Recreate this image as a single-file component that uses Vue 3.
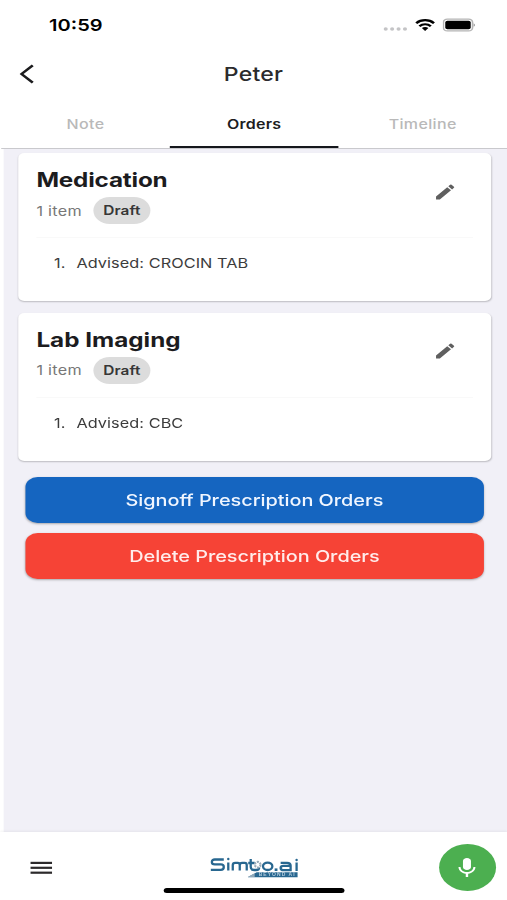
<script setup>
const tabs = [
  { label: 'Note', active: false },
  { label: 'Orders', active: true },
  { label: 'Timeline', active: false },
]
const cards = [
  { title: 'Medication', cls: 'medication', count: '1 item', status: 'Draft', items: ['Advised: CROCIN TAB'] },
  { title: 'Lab Imaging', cls: 'imaging', count: '1 item', status: 'Draft', items: ['Advised: CBC'] },
]
</script>

<template>
  <div class="screen">
    <div class="status">
      <span class="clock">10:59</span>
      <div class="indicators">
        <svg class="dots" width="20" height="14" viewBox="0 0 20 14" fill="#c4c4c6">
          <circle cx="2" cy="11" r="1.7" /><circle cx="7.3" cy="11" r="1.7" />
          <circle cx="12.6" cy="11" r="1.7" /><circle cx="17.9" cy="11" r="1.7" />
        </svg>
        <svg class="wifi" width="17" height="14" viewBox="0 0 17 14" fill="none" stroke="#000" stroke-width="2.2">
          <path d="M1.200 5.2C5.1 1.200 11.9 1.200 15.800 5.2" />
          <path d="M3.8 8.2C6.4 5.6 10.6 5.6 13.2 8.2" />
          <path d="M8.5 12.9L5.8 10.1C7.3 8.7 9.7 8.7 11.2 10.1Z" fill="#000" stroke="none" />
        </svg>
        <svg class="battery" width="27" height="14" viewBox="0 0 27 14">
          <rect x="0.6" y="1.1" width="24" height="11.8" rx="3.2" fill="#fff" stroke="#b4b4b4" stroke-width="1.3" />
          <rect x="2.1" y="2.7" width="21" height="8.6" rx="1.8" fill="#000" />
          <path d="M25.6 5.2Q27.2 7 25.6 8.8Z" fill="#777" />
        </svg>
      </div>
    </div>

    <header class="appbar">
      <svg class="back" width="12" height="20" viewBox="0 0 12 20" fill="none" stroke="#1c1c1e" stroke-width="2.3">
        <path d="M11 1.4L1.8 10L11 18.6" />
      </svg>
      <h1>Peter</h1>
    </header>

    <nav class="tabs">
      <div v-for="tab in tabs" :key="tab.label" class="tab" :class="{ active: tab.active }">{{ tab.label }}</div>
    </nav>

    <main class="body">
      <section v-for="card in cards" :key="card.title" class="card">
        <div class="card-head">
          <div>
            <h2 :class="card.cls">{{ card.title }}</h2>
            <div class="meta">
              <span class="count">{{ card.count }}</span>
              <span class="chip">{{ card.status }}</span>
            </div>
          </div>
          <svg class="edit" width="20" height="20" viewBox="0 0 24 24" fill="#5f5f5f">
            <path d="M3 17.25V21h3.75L17.81 9.94l-3.75-3.75L3 17.25zM20.71 7.04a1 1 0 0 0 0-1.41l-2.34-2.34a1 1 0 0 0-1.41 0l-1.83 1.83 3.75 3.75 1.83-1.83z" />
          </svg>
        </div>
        <div v-for="(item, i) in card.items" :key="item" class="item">
          <span class="num">{{ i + 1 }}.</span><span>{{ item }}</span>
        </div>
      </section>
      <div class="actions">
        <button class="btn sign">Signoff Prescription Orders</button>
        <button class="btn delete">Delete Prescription Orders</button>
      </div>
    </main>

    <footer class="bottom">
      <svg class="menu" width="18" height="14" viewBox="0 0 18 14" fill="#2c2a2b">
        <rect y="0.8" width="18" height="2.2" /><rect y="5.7" width="18" height="2.2" /><rect y="10.6" width="18" height="2.2" />
      </svg>
      <div class="center">
        <svg class="logo" width="74" height="24" viewBox="0 0 90 24" preserveAspectRatio="none" fill="none" stroke="#286790" stroke-width="2.3">
          <path d="M14 3.5H5Q2 3.5 2 6Q2 8.4 5 8.4H11Q14 8.4 14 11Q14 13.8 11 13.8H1" />
          <path d="M18.5 6.5V14.5M23 14.5V9Q23 6.8 25.5 6.8H28Q30 6.8 30 9V14.5M30 9Q30 6.8 32.5 6.8H35Q37 6.8 37 9V14.5" />
          <path d="M41 3V11Q41 14 44.500 14H46.500Q49.500 14 49.500 11.500M38.5 7H45" />
          <circle cx="18.5" cy="3" r="1.2" fill="#286790" stroke="none" />
          <circle cx="48" cy="8.700" r="2.800" stroke="#9aabb8" stroke-width="2.2" stroke-dasharray="2 1" />
          <ellipse cx="58" cy="10.3" rx="4.7" ry="3.7" />
          <rect x="65" y="12.4" width="2.8" height="2.6" fill="#286790" stroke="none" />
          <path d="M71 6.8H77.500Q81 6.8 81 9.5V14.2H74Q71 14.2 71 12Q71 9.9 74 9.9H81" />
          <path d="M87 6.5V15" /><circle cx="87" cy="4" r="1.2" fill="#286790" stroke="none" />
          <path d="M38 21.2L47 16.2H88V21.2Z" fill="#286790" stroke="none" />
          <path d="M38 21L45 17.2V21Z" fill="#91a9ba" stroke="none" />
          <text x="49" y="20.5" class="tagline" textLength="36" fill="#b4cbdb" stroke="none">BEYOND AI</text>
        </svg>
        <div class="home"></div>
      </div>
      <div class="mic">
        <svg width="24" height="24" viewBox="0 0 24 24" fill="#fff">
          <path d="M12 14c1.900 0 3.300-1.34 3.300-3V5c0-1.66-1.400-3-3.300-3S8.700 3.34 8.700 5v6c0 1.66 1.400 3 3.300 3z" />
          <path d="M17.3 11c0 3-2.54 5.1-5.3 5.1S6.7 14 6.7 11H5c0 3.41 2.72 6.23 6 6.72V21h2v-3.28c3.28-.48 6-3.3 6-6.72h-1.700z" />
        </svg>
      </div>
    </footer>
  </div>
</template>

<style>
body { background: #fff; overflow: hidden; }
</style>

<style scoped>
* { box-sizing: border-box; }
/* The screen is laid out at 418px and widened to fill the window. */
.screen {
  width: 418px;
  height: 900px;
  display: flex;
  flex-direction: column;
  transform: scaleX(1.2129);
  transform-origin: 0 0;
  background: #fff;
  font-family: Inter, "Liberation Sans", sans-serif;
  color: #1d1d1f;
}
.status { height: 49px; display: flex; justify-content: space-between; align-items: center; padding: 1px 26px 0 40.5px; }
.clock { font-size: 16.5px; font-weight: 600; color: #000; }
.indicators { display: flex; align-items: center; }
.dots { margin-right: 6px; margin-top: 0; }
.wifi { margin-right: 6.500px; }
svg { display: block; flex: none; }
.appbar { height: 51px; display: grid; grid-template-columns: 60px 1fr 60px; align-items: center; }
.back { margin-left: 15.8px; margin-top: -1px; }
h1 { margin: 0; font-size: 19px; font-weight: 500; letter-spacing: .2px; text-align: center; color: #2b2b2d; }
.tabs { height: 49px; display: grid; grid-template-columns: repeat(3, 1fr); border-bottom: 1px solid #c9c9cd; margin-left: 1px; }
.tab { height: 48px; font-size: 13.2px; font-weight: 500; letter-spacing: .3px; text-align: center; line-height: 49px; color: #b9b9b9; }
.tab.active { color: #1d1d1f; font-weight: 600; letter-spacing: .2px; border-bottom: 2px solid #15171c; }
.body { flex: 1; margin-left: 2.5px; padding: 4px 13.500px 0 12.500px; background: #f1f0f7; }
.card { height: 148px; margin-bottom: 11.5px; padding: 14px 15px 0; background: #fff; border-radius: 5px; box-shadow: 0 1px 1.5px rgba(0, 0, 0, .22); }
.card-head { height: 71px; display: flex; justify-content: space-between; border-bottom: 1px solid #f9f9f9; }
h2 { margin: 0; font-size: 20px; line-height: 26px; font-weight: 700; color: #1c1c1e; }
h2.medication { letter-spacing: -.15px; }
.meta { display: flex; align-items: center; gap: 9.5px; margin-top: 4px; }
.count { font-size: 13.3px; letter-spacing: .25px; color: #777; }
.chip { height: 27px; width: 47px; line-height: 27px; text-align: center; border-radius: 14px; background: #dcdcdc; font-size: 12.7px; font-weight: 600; letter-spacing: .05px; color: #363636; }
.edit { margin: 14.5px 13px 0 0; }
.item { display: flex; padding: 17px 0 0 14.5px; font-size: 13.4px; line-height: 17px; letter-spacing: .07px; color: #3c3c3c; }
.num { width: 18.5px; }
.actions { display: grid; gap: 10px; padding: 4.500px 5.500px 0; }
.btn { height: 46px; border: 0; padding: 0; border-radius: 10px; font: 500 16.4px Inter, sans-serif; letter-spacing: -.03px; color: #f0f6ff; box-shadow: 0 1px 2px rgba(0, 0, 0, .3); }
.sign { background: #1565c0; }
.delete { background: #f64336; color: #ffeceb; }
.bottom { height: 68px; display: grid; grid-template-columns: 1fr 149px 1fr; background: #fff; box-shadow: 0 -1px 2px rgba(0, 0, 0, .05); }
.menu { margin: 28.5px 0 0 25.2px; }
.center { display: flex; flex-direction: column; align-items: center; justify-content: space-between; padding: 24px 0 7px 0.5px; }
.logo { margin-left: 1px; }
.tagline { font: 700 5px "Liberation Sans", sans-serif; }
.home { width: 149px; height: 5px; border-radius: 3px; background: #000; flex: none; }
.mic { width: 47px; height: 47px; margin: 12px 9.3px 0 auto; border-radius: 50%; background: #4caf50; display: flex; align-items: center; justify-content: center; }
</style>
